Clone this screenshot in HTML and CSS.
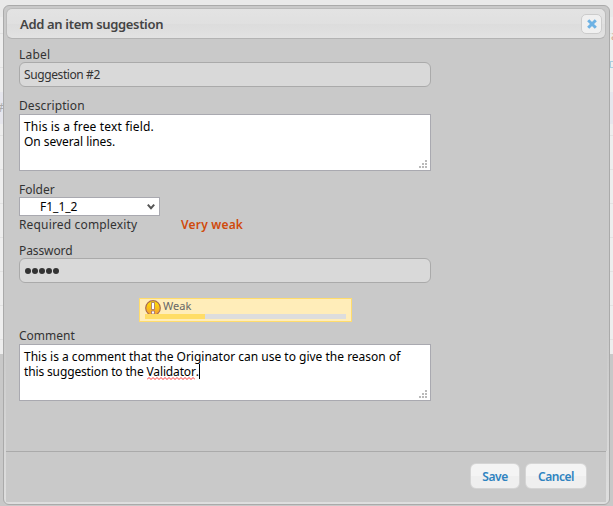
FILE: index.html
```html
<!DOCTYPE html>
<html lang="en">
<head>
<meta charset="utf-8">
<title>Add an item suggestion</title>
<link rel="stylesheet" href="styles.css">
</head>
<body>
<div class="backdrop"><span class="hint hash">#</span><span class="hint end-a">a</span><span class="hint end-b"></span></div>
<main class="dialog">
  <header class="titlebar">
    <h1><span class="t-title">Add an item suggestion</span></h1>
    <button class="close" aria-label="Close"><svg width="10" height="10" viewBox="0 0 10 10"><path d="M1.2 1.2 8.8 8.8M8.8 1.2 1.2 8.8" stroke="#6eb2e4" stroke-width="3"/></svg></button>
  </header>
  <form class="content">
    <label class="t-label">Label</label>
    <div class="input first"><span class="t-sugg">Suggestion #2</span></div>
    <label class="t-desc">Description</label>
    <div class="area first"><span class="t-free">This is a free text field.</span><br><span class="t-lines">On several lines.</span>
      <svg class="grip" width="8" height="8" shape-rendering="crispEdges"><path d="M6 0h2v2h-2zM3 3h2v2h-2zM6 3h2v2h-2zM0 6h2v2h-2zM3 6h2v2h-2zM6 6h2v2h-2z" fill="#bababa"/></svg></div>
    <label class="t-folder">Folder</label>
    <div class="select"><span class="t-f1">F1_1_2</span><svg width="8" height="7" viewBox="0 0 8 7"><path d="M.8 1.7 4 5.2 7.2 1.7" fill="none" stroke="#555" stroke-width="2"/></svg></div>
    <div class="complexity"><span class="t-req">Required complexity</span><strong class="t-very">Very weak</strong></div>
    <label class="t-pass">Password</label>
    <div class="input password"><i></i><i></i><i></i><i></i><i></i></div>
    <div class="strength">
      <svg class="warn" width="16" height="14" viewBox="0 0 16 14"><defs><linearGradient id="g" x2="0" y2="1"><stop stop-color="#ffe500"/><stop offset="1" stop-color="#f69b35"/></linearGradient></defs><circle cx="8" cy="8" r="7.3" fill="url(#g)" stroke="#a86b52" stroke-width="1.2"/><path d="M6.5 2.5h3v7h-3zM6.5 11h3v3h-3z" fill="#fff" stroke="#a06c68" stroke-width=".8"/></svg>
      <span class="t-weak">Weak</span>
      <div class="meter"><div class="fill"></div></div>
    </div>
    <label class="t-comment">Comment</label>
    <div class="area"><span class="t-c1">This is a comment that the Originator can use to give the reason of</span><br><span class="t-c2">this suggestion to the <span class="typo">Validator<svg width="48" height="3" viewBox="0 0 48 3"><path d="M0 2.5l2-2 2 2 2-2 2 2 2-2 2 2 2-2 2 2 2-2 2 2 2-2 2 2 2-2 2 2 2-2 2 2 2-2 2 2 2-2 2 2 2-2 2 2 2-2 2 2" fill="none" stroke="#f22" stroke-width=".9"/></svg></span>.</span><b class="caret"></b>
      <svg class="grip" width="8" height="8" shape-rendering="crispEdges"><path d="M6 0h2v2h-2zM3 3h2v2h-2zM6 3h2v2h-2zM0 6h2v2h-2zM3 6h2v2h-2zM6 6h2v2h-2z" fill="#bababa"/></svg></div>
  </form>
  <footer class="actions">
    <button class="btn save"><span class="t-save">Save</span></button>
    <button class="btn cancel"><span class="t-cancel">Cancel</span></button>
  </footer>
</main>
</body>
</html>
```
FILE: styles.css
```css
* { box-sizing: border-box; }
body { margin: 0; width: 613px; height: 506px; overflow: hidden; background: #c8c8c8; color: #333; font: 12px/15px "Noto Sans", "Open Sans", sans-serif; }
span, label, strong { white-space: nowrap; }
.backdrop { position: absolute; inset: 0 0 auto; height: 354px; background: repeating-linear-gradient(#eeeeee 0 33px, #e2e2e2 33px 34px); }
.backdrop::before { content: ""; position: absolute; inset: 0 0 auto; height: 17px; background: #e9e9e9; }
.backdrop::after { content: ""; position: absolute; top: 92px; width: 100%; height: 32px; background: #e6e6ed; }
.hint { position: absolute; z-index: 1; color: #aaa; }
.hash { left: -4px; top: 100px; }
.end-a { left: 611px; top: 28px; color: #d2a78c; }
.end-b { left: 610px; top: 61px; width: 6px; height: 7px; border: 1px solid #a9cfe0; }
.dialog { position: relative; z-index: 2; margin: 5px 0 0 3px; width: 607px; height: 500px; padding: 2px; border: 1px solid #aaa; border-radius: 6px; background: linear-gradient(#c9c9c9 65%, #dedede); display: flex; flex-direction: column; }
.titlebar { flex: none; height: 31px; margin: 0 1px 0 0; border: 1px solid #b3b3b3; border-color: #bbb #bbb #b3b3b3; border-radius: 6px; background: linear-gradient(#e3e3e3, #e0e0e0 50%, #dcdcdc 51%, #e2e2e2); display: flex; align-items: center; justify-content: space-between; padding: 0 3px 0 13px; }
h1 { margin: 0; font-size: 13px; line-height: 18px; font-weight: 600; color: #444; }
button { font: inherit; padding: 0; }
.close { width: 21px; height: 20px; border: 1px solid #ccc; border-radius: 5px; background: #f0f0f0; display: flex; align-items: center; justify-content: center; }
.content { flex: 1; background: #c9c9c9; margin: 0; padding: 8px 13px 0; display: flex; flex-direction: column; align-items: flex-start; }
label { height: 15px; }
.input { width: 412px; height: 25px; border: 1px solid #aaa; border-radius: 6px; background: #d9d9d9; padding: 4px; line-height: 16px; }
.input.first { margin-bottom: 11px; }
.area { position: relative; width: 412px; height: 57px; border: 1px solid #a9a9b0; background: #fff; color: #000; padding: 4px; }
.area.first { margin-bottom: 11px; }
.t-desc { height: 16px; }
.grip { position: absolute; right: 3px; bottom: 2px; }
.select { width: 141px; height: 19px; border: 1px solid #a9a9b0; background: #fff; color: #000; display: flex; align-items: center; justify-content: space-between; padding: 0 4px 0 20px; }
.complexity { display: flex; height: 16px; margin-top: 1px; margin-bottom: 10px; }
.t-req { width: 118px; }
.complexity strong { margin-left: 44px; color: #d04a0c; font-weight: 600; }
.input.password { display: flex; align-items: center; gap: 1px; padding-left: 5px; margin-bottom: 15px; }
.password i { width: 6px; height: 6px; border-radius: 50%; background: #333; }
.strength { position: relative; width: 213px; height: 24px; margin: 0 0 6px 120px; border: 1px solid #ffdc6c; background: #ffedb9; color: #666; font-size: 11px; line-height: 13px; padding-left: 23px; }
.warn { position: absolute; left: 5px; top: 1px; }
.meter { position: absolute; left: 5px; top: 15px; width: 201px; height: 5px; background: #ddd; }
.fill { width: 30%; height: 100%; background: #ffdd66; }
.t-comment { height: 16px; }
.typo { position: relative; }
.typo svg { position: absolute; left: 0; top: 14px; }
.caret { display: inline-block; width: 1px; height: 15px; background: #000; vertical-align: top; }
.actions { flex: none; height: 51px; border-top: 1px solid #aaa; background: #c9c9c9; display: flex; gap: 5px; justify-content: flex-end; padding: 11px 19px 0 0; margin-right: 1px; }
.btn { height: 26px; border: 1px solid #d5d5d5; border-radius: 6px; background: linear-gradient(#f4f4f4 50%, #efefef 51%); color: #2e83c0; font-size: 12px; line-height: 15px; font-weight: 600; }
.save { width: 50px; }
.cancel { width: 62px; }
.t-title { letter-spacing: -.33px; }
.t-label { letter-spacing: .2px; }
.t-sugg { letter-spacing: -.4px; }
.t-desc { letter-spacing: .1px; }
.t-free { letter-spacing: .16px; }
.t-lines { letter-spacing: -.05px; }
.t-req { letter-spacing: .16px; }
.t-very { letter-spacing: .2px; }
.t-pass { letter-spacing: -.1px; }
.t-c2 { letter-spacing: -.14px; }
.t-save, .t-cancel { letter-spacing: -.45px; }
```
